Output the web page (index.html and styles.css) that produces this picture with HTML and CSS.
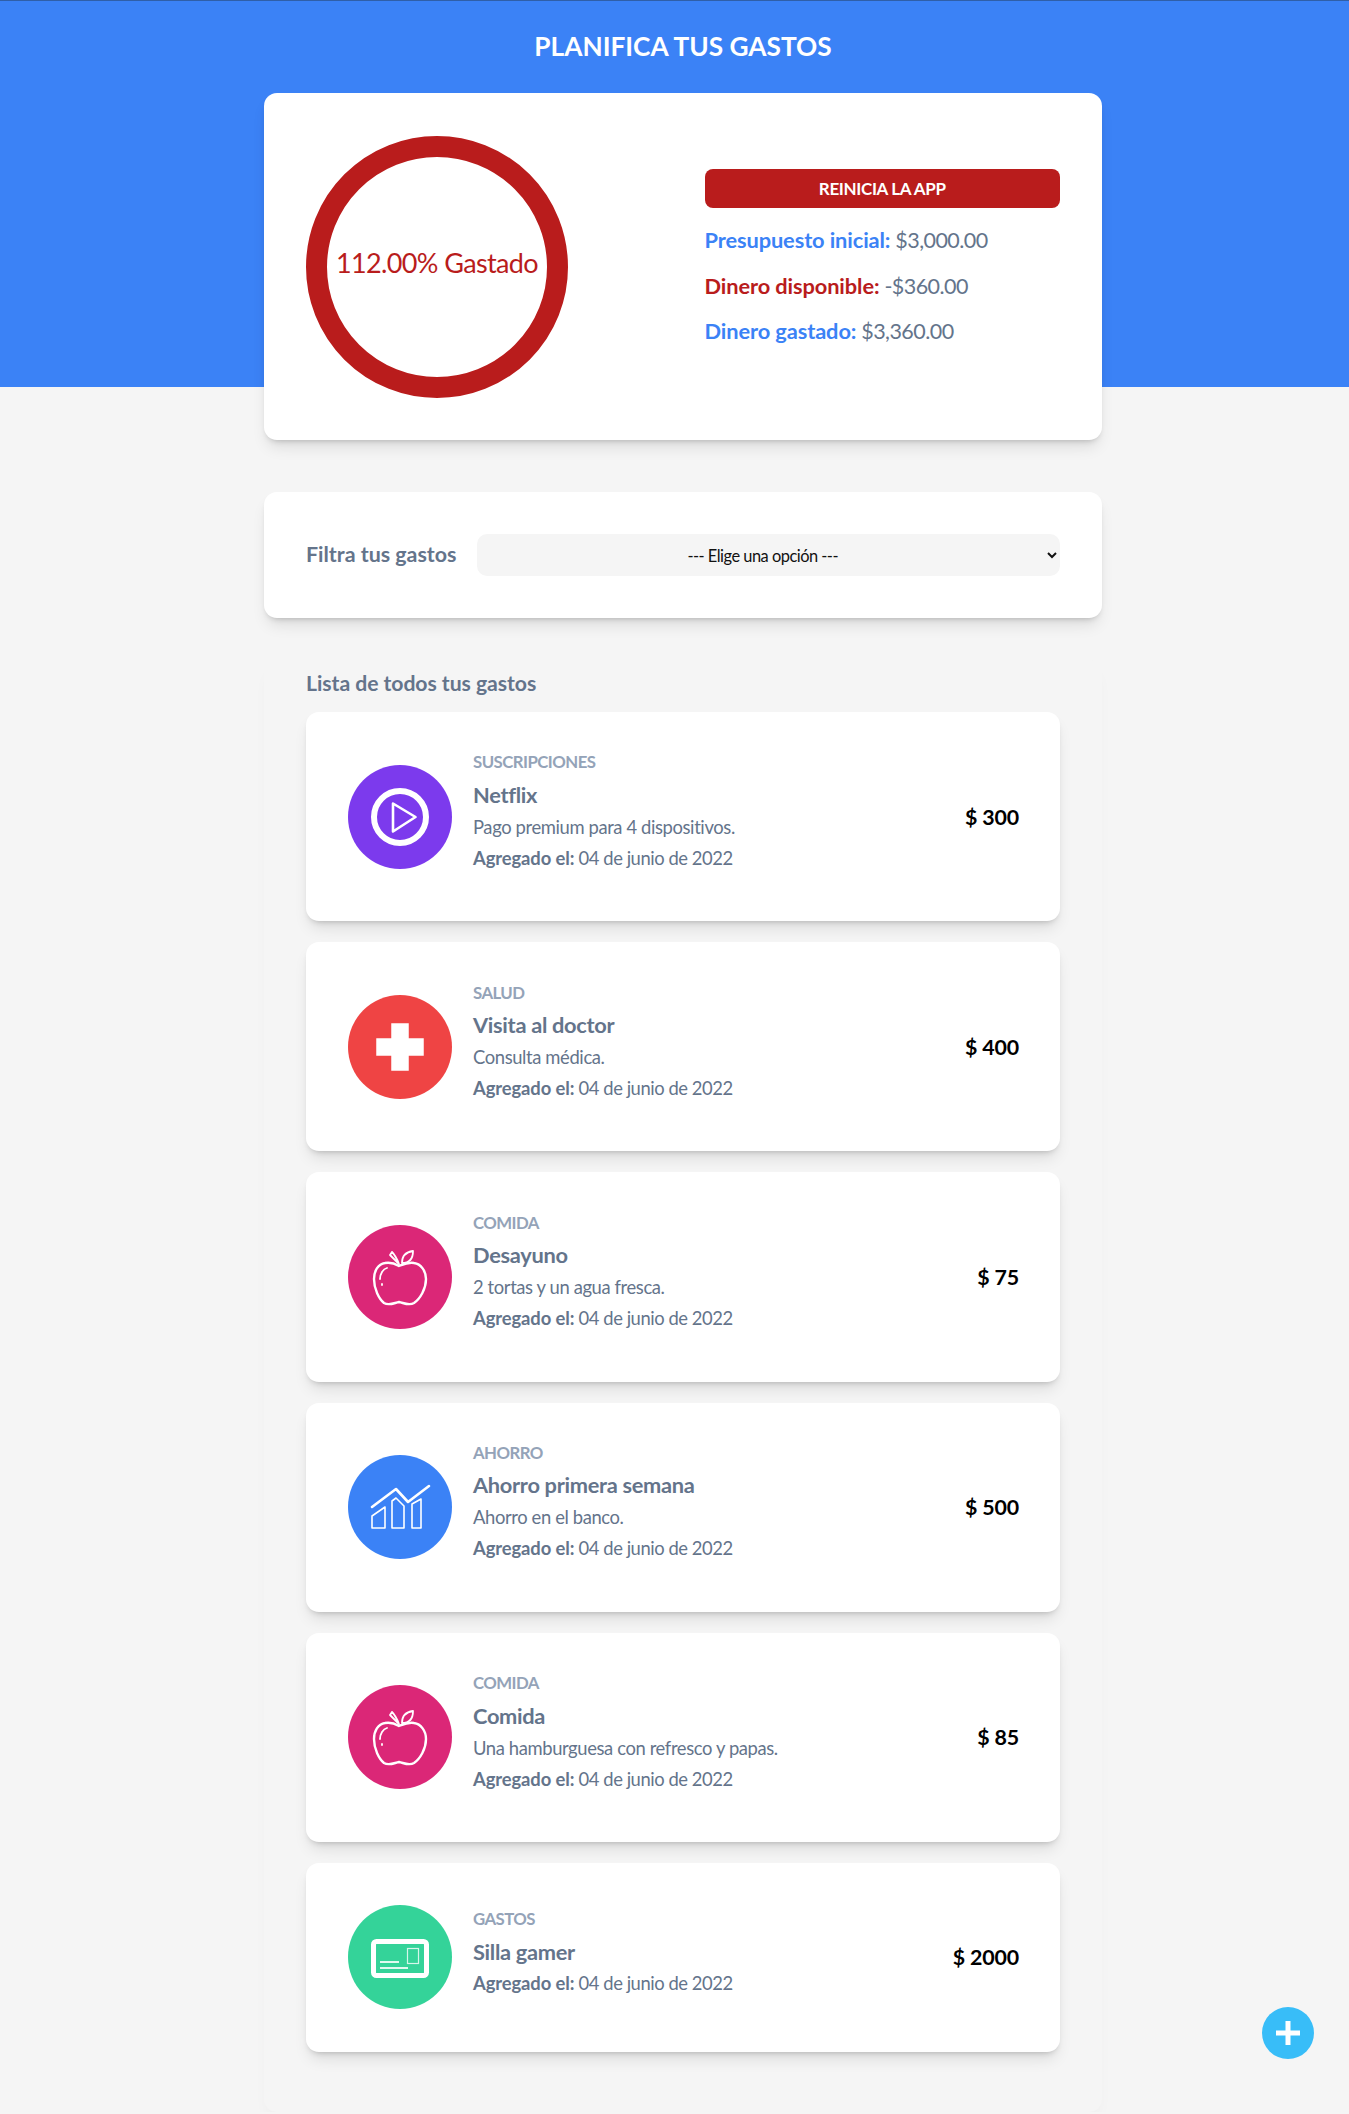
FILE: index.html
```html
<!DOCTYPE html>
<html lang="en">
<head>
    <meta charset="UTF-8">
    <meta name="viewport" content="width=device-width, initial-scale=1.0">
    <title>Planifica tus gastos</title>
    <link rel="stylesheet" href="styles.css">
</head>
<body>
    <header class="header">
        <h1>PLANIFICA TUS GASTOS</h1>
    </header>

    <main class="main">
        <!-- Budget summary -->
        <section class="card budget">
            <div class="progress">
                <span class="progress-text">112.00% Gastado</span>
            </div>
            <div class="budget-info">
                <button class="reset-btn" type="button">REINICIA LA APP</button>
                <p><span class="blue">Presupuesto inicial:</span> $3,000.00</p>
                <p><span class="red">Dinero disponible:</span> -$360.00</p>
                <p><span class="blue">Dinero gastado:</span> $3,360.00</p>
            </div>
        </section>

        <!-- Filter -->
        <section class="card filter">
            <label for="filter">Filtra tus gastos</label>
            <select id="filter">
                <option>--- Elige una opción ---</option>
            </select>
        </section>

        <!-- Expense list -->
        <section class="list">
            <h2>Lista de todos tus gastos</h2>

            <article class="expense">
                <div class="icon purple">
                    <svg viewBox="0 0 104 104" fill="none" stroke="#fff">
                        <circle cx="52" cy="52" r="26" stroke-width="6"/>
                        <path d="M45 38.500 L67.500 52 L45 66.500Z" stroke-width="2.600" stroke-linejoin="round"/>
                    </svg>
                </div>
                <div class="details">
                    <p class="category">SUSCRIPCIONES</p>
                    <p class="name">Netflix</p>
                    <p class="desc">Pago premium para 4 dispositivos.</p>
                    <p class="date"><b>Agregado el:</b> 04 de junio de 2022</p>
                </div>
                <p class="amount">$ 300</p>
            </article>

            <article class="expense">
                <div class="icon red-bg">
                    <svg viewBox="0 0 104 104" fill="#fff">
                        <path d="M43.250 28.250 H60.750 V43.250 H75.750 V60.750 H60.750 V75.750 H43.250 V60.750 H28.250 V43.250 H43.250Z"/>
                    </svg>
                </div>
                <div class="details">
                    <p class="category">SALUD</p>
                    <p class="name">Visita al doctor</p>
                    <p class="desc">Consulta médica.</p>
                    <p class="date"><b>Agregado el:</b> 04 de junio de 2022</p>
                </div>
                <p class="amount">$ 400</p>
            </article>

            <article class="expense">
                <div class="icon pink">
                    <svg viewBox="0 0 104 104" fill="none" stroke="#fff" stroke-width="2.400" stroke-linecap="round" stroke-linejoin="round">
                        <path d="M51 41 C46 38 42 37 37 38 C30 39 26 46 26 54 C26 64 31 74 36 78 C41 81 46 78 51 77 C56 78 61 81 66 78 C72 74 78 64 78 54 C78 46 73 39 66 38 C60 37 56 39 51 41Z"/>
                        <path d="M32 54 C32 49 35 44 39 43 M34 59 V60" stroke-width="1.800"/>
                        <path d="M54 38 C54 31 58 27 65 26 C65 33 62 38 54 38Z M51 39 C49 34 47 30 44 27 L42 30 C45 33 48 36 51 39Z" stroke-width="1.800"/>
                    </svg>
                </div>
                <div class="details">
                    <p class="category">COMIDA</p>
                    <p class="name">Desayuno</p>
                    <p class="desc">2 tortas y un agua fresca.</p>
                    <p class="date"><b>Agregado el:</b> 04 de junio de 2022</p>
                </div>
                <p class="amount">$ 75</p>
            </article>

            <article class="expense">
                <div class="icon blue-bg">
                    <svg viewBox="0 0 104 104" fill="none" stroke="#fff" stroke-linecap="round" stroke-linejoin="round">
                        <path d="M24 52 L48 34 L60 47 L81 31" stroke-width="2.600"/>
                        <path d="M24 61 L37 52 V73 H24Z M44 46 L48 43 L56 51 V73 H44Z M64 49 L73 44 V73 H64Z" stroke-width="1.600"/>
                    </svg>
                </div>
                <div class="details">
                    <p class="category">AHORRO</p>
                    <p class="name">Ahorro primera semana</p>
                    <p class="desc">Ahorro en el banco.</p>
                    <p class="date"><b>Agregado el:</b> 04 de junio de 2022</p>
                </div>
                <p class="amount">$ 500</p>
            </article>

            <article class="expense">
                <div class="icon pink">
                    <svg viewBox="0 0 104 104" fill="none" stroke="#fff" stroke-width="2.400" stroke-linecap="round" stroke-linejoin="round">
                        <path d="M51 41 C46 38 42 37 37 38 C30 39 26 46 26 54 C26 64 31 74 36 78 C41 81 46 78 51 77 C56 78 61 81 66 78 C72 74 78 64 78 54 C78 46 73 39 66 38 C60 37 56 39 51 41Z"/>
                        <path d="M32 54 C32 49 35 44 39 43 M34 59 V60" stroke-width="1.800"/>
                        <path d="M54 38 C54 31 58 27 65 26 C65 33 62 38 54 38Z M51 39 C49 34 47 30 44 27 L42 30 C45 33 48 36 51 39Z" stroke-width="1.800"/>
                    </svg>
                </div>
                <div class="details">
                    <p class="category">COMIDA</p>
                    <p class="name">Comida</p>
                    <p class="desc">Una hamburguesa con refresco y papas.</p>
                    <p class="date"><b>Agregado el:</b> 04 de junio de 2022</p>
                </div>
                <p class="amount">$ 85</p>
            </article>

            <article class="expense">
                <div class="icon green">
                    <svg viewBox="0 0 104 104" fill="none" stroke="#fff">
                        <rect x="25.500" y="36.500" width="53" height="34" rx="3" stroke-width="5"/>
                        <rect x="59.500" y="43.500" width="11" height="15" stroke-width="1.200" stroke-opacity="0.800"/>
                        <path d="M32 57 H51 M32 63 H60" stroke-width="2" stroke-opacity="0.850"/>
                    </svg>
                </div>
                <div class="details">
                    <p class="category">GASTOS</p>
                    <p class="name">Silla gamer</p>
                    <p class="date"><b>Agregado el:</b> 04 de junio de 2022</p>
                </div>
                <p class="amount">$ 2000</p>
            </article>
        </section>
    </main>

    <button class="add-btn" type="button" aria-label="Agregar gasto">
        <svg viewBox="0 0 52 52" fill="#fff"><path d="M23.500 14 H28.500 V23.500 H38 V28.500 H28.500 V38 H23.500 V28.500 H14 V23.500 H23.500Z"/></svg>
    </button>
</body>
</html>
```

FILE: styles.css
```css
/* General styles */
* {
    box-sizing: border-box;
}
body {
    font-family: Lato, "Open Sans", sans-serif;
    margin: 0;
    padding: 0;
    background-color: #f5f5f5;
    color: #64748b;
}
p {
    margin: 0;
}

/* Header */
.header {
    height: 387px;
    background-color: #3b82f6;
    border-top: 1px solid #2f5fa8;
    padding-top: 30px;
}
.header h1 {
    width: 838px;
    margin: 0 0 0 264px;
    font-size: 26.250px;
    line-height: 31px;
    font-weight: 700;
    text-align: center;
    color: #fff;
}

/* Layout */
.main {
    width: 838px;
    margin: -294px 0 0 264px;
}
.card {
    background-color: #fff;
    border-radius: 13px;
    box-shadow: 0 10px 15px -3px rgba(0, 0, 0, 0.1), 0 4px 6px -4px rgba(0, 0, 0, 0.25);
}

/* Budget */
.budget {
    height: 347px;
    padding: 42px;
    display: grid;
    grid-template-columns: 1fr 355.500px;
    align-items: center;
}
.progress {
    width: 262px;
    height: 262px;
    border: 21px solid #b91c1c;
    border-radius: 50%;
    display: flex;
    align-items: center;
    justify-content: center;
}
.progress-text {
    font-size: 27px;
    letter-spacing: -0.630px;
    color: #b91c1c;
    margin-top: -8px;
    white-space: nowrap;
}
.budget-info {
    margin-top: -20px;
}
.reset-btn {
    display: block;
    width: 100%;
    height: 39px;
    margin-bottom: 19.500px;
    border: none;
    border-radius: 8px;
    background-color: #b91c1c;
    color: #fff;
    font-family: inherit;
    font-size: 17px;
    letter-spacing: -0.350px;
    font-weight: 700;
    cursor: pointer;
}
.budget-info p {
    font-size: 21.500px;
    letter-spacing: -0.550px;
    line-height: 26px;
    margin-bottom: 19.500px;
}
.budget-info p:last-child {
    margin-bottom: 0;
}
.blue,
.red {
    font-size: 21.800px;
    letter-spacing: -0.100px;
    font-weight: 700;
}
.blue {
    color: #3b82f6;
}
.red {
    color: #b91c1c;
}

/* Filter */
.filter {
    height: 126px;
    margin-top: 52px;
    padding: 0 42px;
    display: flex;
    align-items: center;
    gap: 21px;
}
.filter label {
    font-size: 21.400px;
    font-weight: 700;
    white-space: nowrap;
    margin-top: -2px;
}
.filter select {
    flex: 1;
    height: 42px;
    border: none;
    border-radius: 10px;
    background-color: #f5f5f5;
    color: #111;
    font-family: inherit;
    font-size: 16.400px;
    letter-spacing: -0.500px;
    text-align: center;
}

/* Expense list */
.list {
    height: 1452px;
    margin-top: 42px;
    padding: 0 42px;
    border-radius: 13px;
    background-color: #f5f5f5;
    box-shadow: 0 10px 15px -3px rgba(0, 0, 0, 0.03);
}
.list h2 {
    margin: 0;
    height: 52px;
    padding-top: 10px;
    font-size: 21.200px;
    letter-spacing: -0.050px;
    line-height: 26px;
    font-weight: 700;
}
.expense {
    display: flex;
    align-items: center;
    min-height: 209.200px;
    padding: 0 41px 0 42px;
    margin-bottom: 21px;
    background-color: #fff;
    border-radius: 13px;
    box-shadow: 0 10px 15px -3px rgba(0, 0, 0, 0.1), 0 4px 6px -4px rgba(0, 0, 0, 0.25);
}
.expense:last-child {
    min-height: 189px;
}
.icon {
    width: 104px;
    height: 104px;
    border-radius: 50%;
    flex-shrink: 0;
}
.icon svg {
    display: block;
    width: 104px;
    height: 104px;
}
.purple { background-color: #7c3aed; }
.red-bg { background-color: #ef4444; }
.pink { background-color: #db2777; }
.blue-bg { background-color: #3b82f6; }
.green { background-color: #34d399; }
.details {
    flex: 1;
    margin: 0 0 11px 21px;
}
.category {
    font-size: 16.800px;
    letter-spacing: -0.550px;
    line-height: 21px;
    font-weight: 700;
    color: #94a3b8;
}
.name {
    margin-top: 9.500px;
    font-size: 21.800px;
    letter-spacing: -0.300px;
    line-height: 26px;
    font-weight: 700;
}
.desc {
    margin-top: 6px;
    font-size: 18.400px;
    letter-spacing: -0.380px;
    line-height: 26px;
}
.date {
    margin-top: 5px;
    font-size: 18.400px;
    letter-spacing: -0.450px;
    line-height: 26px;
}
.date b {
    letter-spacing: -0.100px;
}
.amount {
    font-size: 21.400px;
    letter-spacing: -0.150px;
    font-weight: 700;
    color: #000;
}

/* Floating button */
.add-btn {
    position: fixed;
    left: 1262px;
    top: 2007px;
    width: 52px;
    height: 52px;
    padding: 0;
    border: none;
    border-radius: 50%;
    background-color: #38bdf8;
    cursor: pointer;
}
.add-btn svg {
    display: block;
}
```
